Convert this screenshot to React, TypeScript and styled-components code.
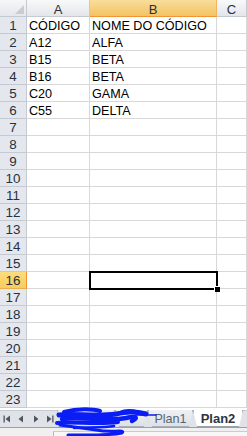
import styled, { createGlobalStyle, css } from 'styled-components';

const GlobalStyle = createGlobalStyle`
  html, body {
    margin: 0;
    padding: 0;
    background: #ffffff;
    overflow: hidden;
  }
  body {
    font-family: "Liberation Sans", Arial, sans-serif;
  }
`;

const Wrapper = styled.div`
  width: 247px;
  height: 436px;
  position: relative;
  display: flex;
  flex-direction: column;
  overflow: hidden;
  background: #ffffff;
`;

const Sheet = styled.div`
  display: grid;
  grid-template-columns: 27px 63px 127px 30px;
  grid-auto-rows: 17px;
`;

const Corner = styled.div`
  position: relative;
  box-sizing: border-box;
  background: linear-gradient(#f6f7f9, #e4e7eb);
  border-right: 1px solid #c5cad1;
  border-bottom: 1px solid #c5cad1;

  &::after {
    content: '';
    position: absolute;
    right: 2px;
    bottom: 2px;
    width: 0;
    height: 0;
    border-left: 9px solid transparent;
    border-bottom: 9px solid #c9cdd2;
  }
`;

const ColHeader = styled.div<{ $active?: boolean }>`
  box-sizing: border-box;
  height: 17px;
  padding-top: 2px;
  line-height: 15px;
  font-size: 13px;
  text-align: center;
  color: #27303c;
  background: linear-gradient(#f8f9fa, #e3e6ea);
  border-right: 1px solid #c5cad1;
  border-bottom: 1px solid #c5cad1;
  overflow: hidden;
  white-space: nowrap;

  ${({ $active }) =>
    $active &&
    css`
      background: linear-gradient(#f9dd9a, #f2c362);
      border-bottom: 1px solid #f29436;
      border-right: 1px solid #f2b45c;
    `}
`;

const RowHeader = styled.div<{ $active?: boolean }>`
  box-sizing: border-box;
  height: 17px;
  line-height: 17px;
  font-size: 13.4px;
  text-align: center;
  color: #27303c;
  background: #e4e8ee;
  border-right: 1px solid #c5cad1;
  border-bottom: 1px solid #c5cad1;

  ${({ $active }) =>
    $active &&
    css`
      background: linear-gradient(#fcdc7c, #f7cd5e);
      border-right: 1px solid #f29436;
      border-bottom: 1px solid #e6b04d;
    `}
`;

const Cell = styled.div<{ $selected?: boolean }>`
  position: relative;
  box-sizing: border-box;
  height: 17px;
  padding: 1px 0 0 2px;
  line-height: 16px;
  font-size: 12.6px;
  color: #000000;
  border-right: 1px solid #d8d8d8;
  border-bottom: 1px solid #d8d8d8;
  white-space: nowrap;

  ${({ $selected }) =>
    $selected &&
    css`
      &::before {
        content: '';
        position: absolute;
        left: -1px;
        top: -1px;
        right: -2px;
        bottom: -2px;
        border: 2px solid #000000;
        z-index: 2;
      }
      &::after {
        content: '';
        position: absolute;
        right: -4px;
        bottom: -4px;
        width: 5px;
        height: 5px;
        background: #000000;
        border-left: 1px solid #ffffff;
        border-top: 1px solid #ffffff;
        z-index: 3;
      }
    `}
`;

const TabBar = styled.div`
  position: relative;
  display: flex;
  align-items: stretch;
  height: 16px;
  margin-top: 2px;
  background: #dfe3e8;
  border-top: 1px solid #c6cbd1;
  border-bottom: 1px solid #9aa0a8;
`;

const NavGroup = styled.div`
  display: flex;
  align-items: center;
  width: 57px;
  padding-left: 0;
  box-sizing: border-box;
`;

const NavButton = styled.span`
  display: flex;
  align-items: center;
  justify-content: center;
  width: 15px;
  height: 14px;
  color: #4c5561;
`;

const Tabs = styled.div`
  flex: 1;
  display: flex;
  align-items: stretch;
`;

const Tab = styled.div<{ $active?: boolean; $width: number }>`
  box-sizing: border-box;
  width: ${({ $width }) => $width}px;
  display: flex;
  align-items: center;
  justify-content: center;
  font-size: 12.6px;
  color: #5a6470;
  background: linear-gradient(#eef0f3, #dde1e6);
  border: 1px solid #a9b0b9;
  border-top: none;
  margin-top: -1px;
  clip-path: polygon(0 0, 100% 0, calc(100% - 4px) 100%, 4px 100%);
  padding-top: 1px;

  ${({ $active }) =>
    $active &&
    css`
      background: #ffffff;
      color: #2c3540;
      font-weight: bold;
      font-size: 13px;
      border-color: #9aa0a8;
    `}
`;

const BottomStrip = styled.div`
  flex: 1;
  display: flex;
  background: #f0f0f0;
`;

const ScrollLeft = styled.div`
  width: 53px;
`;

const ScrollTrack = styled.div`
  flex: 1;
  margin-top: 3px;
  border-left: 1px solid #b4b8bd;
  border-top: 1px solid #c9ccd0;
  background: #f7f7f7;
`;

const Scribble = styled.svg`
  position: absolute;
  left: 54px;
  top: 403px;
  z-index: 5;
`;

const rows: [string, string][] = [
  ['CÓDIGO', 'NOME DO CÓDIGO'],
  ['A12', 'ALFA'],
  ['B15', 'BETA'],
  ['B16', 'BETA'],
  ['C20', 'GAMA'],
  ['C55', 'DELTA'],
];

const ACTIVE_ROW = 16;

function NavIcon({ kind }: { kind: 'first' | 'prev' | 'next' | 'last' }) {
  return (
    <svg width="8" height="8" viewBox="0 0 8 8">
      {kind === 'first' && (
        <>
          <rect x="0.5" y="0.5" width="1.3" height="7" fill="currentColor" />
          <path d="M7 0.5 L2.5 4 L7 7.5 Z" fill="currentColor" />
        </>
      )}
      {kind === 'prev' && <path d="M6 0.5 L1.5 4 L6 7.5 Z" fill="currentColor" />}
      {kind === 'next' && <path d="M2 0.5 L6.5 4 L2 7.5 Z" fill="currentColor" />}
      {kind === 'last' && (
        <>
          <path d="M1 0.5 L5.5 4 L1 7.5 Z" fill="currentColor" />
          <rect x="6.2" y="0.5" width="1.3" height="7" fill="currentColor" />
        </>
      )}
    </svg>
  );
}

function App() {
  const rowNums = Array.from({ length: 23 }, (_, i) => i + 1);

  return (
    <Wrapper>
      <GlobalStyle />
      <Sheet>
        <Corner />
        <ColHeader>A</ColHeader>
        <ColHeader $active>B</ColHeader>
        <ColHeader>C</ColHeader>
        {rowNums.map((n) => {
          const data = rows[n - 1];
          return [
            <RowHeader key={`h${n}`} $active={n === ACTIVE_ROW}>
              {n}
            </RowHeader>,
            <Cell key={`a${n}`}>{data ? data[0] : ''}</Cell>,
            <Cell key={`b${n}`} $selected={n === ACTIVE_ROW}>
              {data ? data[1] : ''}
            </Cell>,
            <Cell key={`c${n}`} />,
          ];
        })}
      </Sheet>

      <TabBar>
        <NavGroup>
          <NavButton>
            <NavIcon kind="first" />
          </NavButton>
          <NavButton>
            <NavIcon kind="prev" />
          </NavButton>
          <NavButton>
            <NavIcon kind="next" />
          </NavButton>
          <NavButton>
            <NavIcon kind="last" />
          </NavButton>
        </NavGroup>
        <Tabs>
          <Tab $width={58} />
          <Tab $width={33} />
          <Tab $width={45}>Plan1</Tab>
          <Tab $width={50} $active>
            Plan2
          </Tab>
        </Tabs>
      </TabBar>

      <BottomStrip>
        <ScrollLeft />
        <ScrollTrack />
      </BottomStrip>

      {/* redaction scribble over the hidden sheet names */}
      <Scribble width="104" height="33" viewBox="0 0 104 33">
        <g fill="none" stroke="#0a1df4" strokeLinecap="round" strokeLinejoin="round">
          <path d="M10 9 C24 5 40 6 46 8" strokeWidth="4" />
          <path d="M5 12 C20 10 42 14 62 11 C72 9 80 8 92 11" strokeWidth="5" />
          <path d="M8 16 C28 13 52 19 72 15 C80 13 86 14 78 18" strokeWidth="4.5" />
          <path d="M3 20 C20 18 42 22 64 19" strokeWidth="4" />
          <path d="M66 10 C72 7 80 8 86 10" strokeWidth="4" />
          <path d="M82 12 L102 12" strokeWidth="1.6" />
          <path d="M6 22 L42 27 C58 30 72 26 68 30 C52 33 30 32 14 32" strokeWidth="3" />
          <path d="M20 25 C34 24 50 25 60 23" strokeWidth="2.5" />
        </g>
      </Scribble>
    </Wrapper>
  );
}

export default App;
